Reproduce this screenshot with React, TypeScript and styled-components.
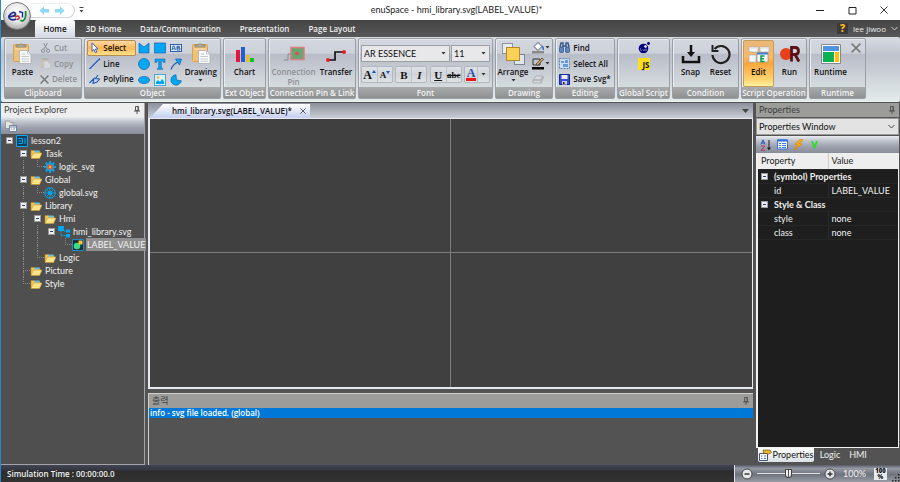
import React from "react";
import styled, { createGlobalStyle, css } from "styled-components";

const Global = createGlobalStyle`
  *, *::before, *::after { box-sizing: border-box; }
  html, body { margin: 0; }
  body { background: #535353; }
  button, select, input { font: inherit; color: inherit; margin: 0; padding: 0; }
  button { border: 0; background: none; cursor: default; }
  svg { display: block; flex: none; }
`;

const textStack = `Lato, "Noto Sans", "Noto Sans CJK KR", sans-serif`;
const labelStack = `"Open Sans", "Noto Sans", sans-serif`;
const barGradient = "linear-gradient(#e9edf1 0, #c3c7cf 25%, #9da2ae 60%, #888d99 100%)";

const labelText = css`
  font-family: ${labelStack};
  font-size: 8px;
  font-weight: 600;
`;

const Window = styled.div`
  display: flex;
  flex-direction: column;
  min-height: 100vh;
  border-left: 1px solid #2b86d0;
  background: #535353;
  color: #111;
  font: 9px/12px ${textStack};
`;

/* ---------- title bar and tabs ---------- */
const Header = styled.header`
  position: relative;
`;
const TitleBar = styled.div`
  display: grid;
  grid-template-columns: 1fr auto 1fr;
  align-items: center;
  height: 20px;
  background: #fff;
  padding-left: 12px;
`;
const QuickBar = styled.div`
  display: flex;
  align-items: center;
  gap: 4px;
  padding-left: 18px;
`;
const QuickPill = styled.div`
  display: flex;
  align-items: center;
  gap: 4px;
  width: 44px;
  height: 15px;
  padding-left: 8px;
  border: 1px solid #cdd3da;
  border-left: 0;
  border-top-color: #eceff2;
  border-radius: 0 8px 8px 0;
`;
const Title = styled.h1`
  margin: 0;
  font-size: 9px;
  font-weight: 400;
  color: #222;
`;
const WindowButtons = styled.div`
  display: flex;
  justify-content: flex-end;
  gap: 23px;
  padding-right: 12px;
`;
const AppButton = styled.button`
  position: absolute;
  left: 2px;
  top: 2px;
  width: 28px;
  height: 28px;
  border-radius: 50%;
  border: 1px solid #777;
  background: radial-gradient(circle at 50% 35%, #fff 0, #e8e8e8 45%, #b5b5b5 75%, #8c8c8c 100%);
  display: grid;
  place-items: center;
`;
const TabRow = styled.nav`
  display: flex;
  align-items: stretch;
  height: 17px;
  padding: 0 2px 0 34px;
  background: linear-gradient(#454545, #575757);
  color: #eee;
  ${labelText}
`;
const Tab = styled.button<{ $w: number; $on?: boolean }>`
  width: ${(p) => p.$w}px;
  border-radius: 2px 2px 0 0;
  padding-top: 1px;
  ${(p) =>
    p.$on &&
    css`
      background: linear-gradient(#fff, #d5dae3);
      color: #111;
    `}
`;
const User = styled.div`
  display: flex;
  align-items: center;
  gap: 5px;
  margin-left: auto;
  font-weight: 400;
`;
const Help = styled.button`
  width: 11px;
  height: 11px;
  background: #3a3a3a;
  color: #fdb813;
  font-size: 10px;
  line-height: 11px;
  font-weight: 800;
`;

/* ---------- ribbon ---------- */
const Ribbon = styled.div`
  display: flex;
  gap: 2px;
  padding: 1px 2px 2px 3px;
  background: linear-gradient(#d8dce2 0, #bfc3cd 28%, #c8ccd3 50%, #e2ebea 100%);
  border-radius: 2px;
  border-bottom: 1px solid #eef4f3;
  overflow: hidden;
  line-height: 10px;
  ${labelText}
`;
const GroupBox = styled.section<{ $w: number }>`
  display: flex;
  flex-direction: column;
  flex: 0 0 ${(p) => p.$w}px;
  min-width: 0;
  height: 61px;
  border: 1px solid #9b9fa5;
  border-radius: 2px;
  box-shadow: inset 1px 1px 0 #e8ebef;
  background: linear-gradient(#d3d7de 0, #cdd1d9 24%, #b9bdc8 26%, #c6cad2 50%, #dde7e6 100%);
`;
const GroupBody = styled.div<{ $pad?: number }>`
  display: flex;
  flex: 1;
  min-height: 0;
  padding: 1px ${(p) => p.$pad ?? 2}px 0;
  justify-content: center;
`;
const Caption = styled.h2`
  display: flex;
  justify-content: center;
  flex: none;
  margin: 0;
  height: 11px;
  line-height: 11px;
  white-space: nowrap;
  color: #f4f4f4;
  background: linear-gradient(#a9abad, #8e9092);
  ${labelText}
`;
const Big = styled.button<{ $w: number; $hot?: boolean }>`
  display: flex;
  flex: none;
  flex-direction: column;
  align-items: center;
  width: ${(p) => p.$w}px;
  height: 47px;
  padding-top: 2px;
  gap: 2px;
  white-space: nowrap;
  border-radius: 2px;
  border: 1px solid transparent;
  &:disabled { color: #8c8f94; }
  ${(p) =>
    p.$hot &&
    css`
      border-color: #c59b5b;
      background: linear-gradient(#e8b878 0, #fbb765 35%, #fba540 50%, #fdd26e 85%, #fff0a0 100%);
    `}
`;
const Stack = styled.div`
  display: flex;
  flex-direction: column;
  flex: none;
`;
const Small = styled.button<{ $hot?: boolean; $gap?: number }>`
  display: flex;
  align-items: center;
  gap: ${(p) => p.$gap ?? 3}px;
  height: 16px;
  padding: 0 1px;
  white-space: nowrap;
  border: 1px solid transparent;
  border-radius: 2px;
  &:disabled { color: #8c8f94; }
  ${(p) =>
    p.$hot &&
    css`
      border-color: #b98b4a;
      background: linear-gradient(#fcd9a6, #fdb85b 50%, #fee08a);
    `}
`;
const Faded = styled.span`
  opacity: 0.55;
  filter: grayscale(0.5);
`;
const ShapeGrid = styled.div`
  display: grid;
  flex: none;
  grid-template-columns: repeat(3, 16px);
  grid-auto-rows: 16px;
`;
const IconButton = styled.button`
  display: flex;
  align-items: center;
  justify-content: center;
  gap: 2px;
`;
const FontPanel = styled.div`
  display: flex;
  flex-direction: column;
  flex: 1;
  gap: 4px;
  padding-top: 5px;
`;
const FontRow = styled.div`
  display: flex;
  justify-content: space-between;
`;
const Combo = styled.div<{ $w: number }>`
  display: grid;
  align-items: center;
  width: ${(p) => p.$w}px;
  height: 17px;
  border: 1px solid #9b9fa6;
  background: #e8e8ea;
  font-family: ${textStack};
  font-size: 9px;
  font-weight: 400;
  > * { grid-area: 1 / 1; }
  > svg { justify-self: end; margin-right: 3px; pointer-events: none; }
`;
const PlainSelect = styled.select`
  appearance: none;
  width: 100%;
  height: 100%;
  border: 0;
  padding-left: 2px;
  background: transparent;
`;
const ToolPair = styled.div<{ $w: number }>`
  display: grid;
  grid-template-columns: 1fr 1fr;
  width: ${(p) => p.$w}px;
  height: 17px;
  border: 1px solid #b4b8be;
  border-radius: 2px;
  background: linear-gradient(#dfe3e8, #cfd4da 50%, #dde4e5);
`;
const Letter = styled.button<{ $size?: number; $italic?: boolean; $line?: string }>`
  display: flex;
  align-items: center;
  justify-content: center;
  min-width: 0;
  font-family: "Liberation Serif", serif;
  font-weight: 700;
  font-size: ${(p) => p.$size ?? 11}px;
  font-style: ${(p) => (p.$italic ? "italic" : "normal")};
  text-decoration: ${(p) => p.$line ?? "none"};
  & + & { border-left: 1px solid #bfc3c8; }
`;
const ColorLetter = styled.span`
  font-family: "Liberation Serif", serif;
  font-size: 12px;
  line-height: 10px;
  color: #2a4fa0;
  border-bottom: 3px solid #f01414;
  padding: 0 1px;
`;
const JsBadge = styled.span`
  display: block;
  width: 12px;
  height: 12px;
  background: #ffe01b;
  color: #111;
  font-size: 8px;
  line-height: 14px;
  font-weight: 700;
  text-align: right;
`;

/* ---------- workspace ---------- */
const Workspace = styled.main`
  display: grid;
  grid-template-columns: 144px minmax(0, 1fr) 143px;
  gap: 3px;
  flex: 1;
  margin-top: 1px;
  padding-right: 1px;
  background: #535353;
`;
const Panel = styled.section`
  display: flex;
  flex-direction: column;
  min-width: 0;
`;
const PanelBordered = styled(Panel)`
  border-right: 1px solid #a5a5a5;
  border-bottom: 1px solid #a5a5a5;
  background: #4f4f4f;
`;
const PanelHead = styled.div<{ $dim?: boolean }>`
  display: flex;
  align-items: center;
  justify-content: space-between;
  height: 14px;
  padding: 0 4px 0 3px;
  background: ${(p) => (p.$dim ? "#9c9d9b" : "#eeeeee")};
  color: ${(p) => (p.$dim ? "#3f3f3f" : "#444")};
`;
const Toolbar = styled.div`
  display: flex;
  align-items: center;
  gap: 5px;
  height: 17px;
  padding: 0 5px 0 4px;
  background: ${barGradient};
`;
const Tree = styled.ul`
  margin: 0;
  padding: 0 0 0 1px;
  list-style: none;
  color: #f0f0f0;
`;
const TreeRow = styled.li`
  display: flex;
  align-items: center;
  height: 13px;
`;
const Rail = styled.span<{ $kind: string }>`
  width: 14px;
  height: 13px;
  flex: none;
  display: grid;
  grid-template: 1fr 1fr / 1fr 1fr;
  &::before {
    content: "";
    grid-area: 1 / 2;
    border-left: ${(p) => (p.$kind === " " ? "0" : "1px dotted #8a8a8a")};
    border-bottom: ${(p) => (p.$kind === "L" || p.$kind === "T" ? "1px dotted #8a8a8a" : "0")};
  }
  &::after {
    content: "";
    grid-area: 2 / 2;
    border-left: ${(p) => (p.$kind === "|" || p.$kind === "T" ? "1px dotted #8a8a8a" : "0")};
  }
`;
const ExpandCell = styled.span`
  width: 14px;
  flex: none;
  display: grid;
  place-items: center;
`;
const Expander = styled.button`
  width: 7px;
  height: 7px;
  background: #eef0f4;
  border: 1px solid #9a9a9a;
  display: grid;
  place-items: center;
  &::before { content: ""; width: 3px; height: 1px; background: #2b3d77; }
`;
const TreeLabel = styled.span<{ $on?: boolean }>`
  margin-left: 2px;
  padding: 0 1px;
  line-height: 13px;
  white-space: nowrap;
  background: ${(p) => (p.$on ? "#8f8f8f" : "transparent")};
`;
const DocTabs = styled.div`
  display: flex;
  align-items: flex-end;
  justify-content: space-between;
  height: 15px;
  padding: 0 4px 0 2px;
  background: linear-gradient(#8b909b, #c9cdd4);
`;
const DocTab = styled.div`
  display: flex;
  align-items: center;
  gap: 8px;
  width: 160px;
  height: 14px;
  padding: 0 4px 0 20px;
  justify-content: flex-end;
  white-space: nowrap;
  background: linear-gradient(#fff, #c5d0f0);
  clip-path: polygon(13px 0, 100% 0, 100% 100%, 0 100%);
  ${labelText}
`;
const MenuCell = styled.button`
  display: grid;
  place-items: center;
  height: 14px;
`;
const Canvas = styled.div`
  flex: 1;
  display: grid;
  grid-template: 1fr 1fr / 1fr 1fr;
  border: 1px solid #e6e9ef;
  border-width: 1px 1px 2px 2px;
  background: #404040;
`;
const Quadrant = styled.div<{ $right?: boolean; $bottom?: boolean }>`
  border: 0 solid #7c7c7c;
  border-right-width: ${(p) => (p.$right ? 1 : 0)}px;
  border-bottom-width: ${(p) => (p.$bottom ? 1 : 0)}px;
`;
const Output = styled(Panel)`
  height: 72px;
  margin-top: 4px;
  border-top: 1px solid #d0d0d0;
  border-left: 1px solid #d0d0d0;
  background: #535353;
`;
const OutputLine = styled.div`
  height: 10px;
  padding-left: 1px;
  background: #0078d7;
  color: #fff;
  line-height: 10px;
  ${labelText}
`;
const PropSelect = styled.div`
  display: grid;
  align-items: center;
  height: 17px;
  margin: 1px 0;
  border: 1px solid #9a9a9a;
  background: #e3e3e3;
  > * { grid-area: 1 / 1; }
  > svg { justify-self: end; margin-right: 3px; pointer-events: none; }
`;
const PropFrame = styled.div`
  flex: 1;
  border: 1px solid #f2f2f2;
  border-width: 0 1px 1px 2px;
  background: #1e1e1e;
  display: flex;
`;
const PropTable = styled.table`
  width: 100%;
  height: max-content;
  border-collapse: collapse;
  table-layout: fixed;
  color: #f0f0f0;
  th, td {
    height: 14px;
    padding: 0 3px;
    text-align: left;
    font-weight: 400;
    border-bottom: 1px solid #262626;
    line-height: 13px;
  }
  thead th { height: 16px; background: #eeeeee; color: #222; }
  thead th + th { border-left: 1px solid #ccc; }
  tbody td { border-left: 1px solid #2a2a2a; }
  tbody th { padding-left: 16px; }
`;
const PropGroup = styled.div`
  display: flex;
  align-items: center;
  gap: 6px;
  margin-left: -13px;
  font-weight: 700;
`;
const DockTabs = styled.div`
  display: flex;
  align-items: center;
  height: 17px;
  padding: 0 0 3px 2px;
  color: #f0f0f0;
`;
const DockTab = styled.button<{ $w: number; $on?: boolean }>`
  display: flex;
  align-items: center;
  justify-content: center;
  gap: 1px;
  width: ${(p) => p.$w}px;
  height: 14px;
  ${(p) =>
    p.$on &&
    css`
      background: linear-gradient(#fff, #dbe1e6);
      color: #111;
      border-radius: 0 0 2px 2px;
    `}
`;

/* ---------- status bar ---------- */
const StatusBar = styled.footer`
  display: flex;
  justify-content: space-between;
  align-items: stretch;
  height: 17px;
  background: linear-gradient(#414554 0, #353740 30%, #2c2c2c 35%, #333 100%);
  color: #f2f2f2;
`;
const Simulation = styled.span`
  padding-left: 6px;
  line-height: 17px;
  ${labelText}
`;
const ZoomBar = styled.div`
  display: flex;
  align-items: center;
  width: 166px;
  padding-left: 6px;
  gap: 4px;
  background: linear-gradient(#555a66 0, #9599a2 20%, #6e737d 55%, #999da4 100%);
  border-left: 1px solid #ddd;
`;
const RoundButton = styled.button`
  width: 12px;
  height: 12px;
`;
const Percent = styled.span`
  padding-left: 3px;
`;
const Slider = styled.input`
  appearance: none;
  width: 63px;
  height: 12px;
  background: linear-gradient(#e0e0e0, #e0e0e0) center / 100% 1px no-repeat;
  &::-webkit-slider-thumb {
    appearance: none;
    width: 7px;
    height: 9px;
    border: 1px solid #444;
    border-radius: 1px 1px 4px 4px;
    background: linear-gradient(90deg, #eee 40%, #555 40%, #555 60%, #eee 60%);
  }
`;
const FitButton = styled.button`
  width: 15px;
  height: 12px;
  margin-left: 4px;
  background: #e8ecef;
  color: #111;
  font-family: ${labelStack};
  font-size: 6px;
  line-height: 6px;
  font-weight: 800;
`;
const Grip = styled.span`
  align-self: flex-end;
  margin-left: auto;
`;

/* ---------- icons ---------- */
type SvgProps = { w?: number; h?: number; vb?: string; children: React.ReactNode };
const Svg = ({ w = 12, h = w, vb, children }: SvgProps) => (
  <svg width={w} height={h} viewBox={vb ?? `0 0 ${w} ${h}`} fill="none" aria-hidden="true">{children}</svg>
);
const Caret = ({ c = "#333" }: { c?: string }) => <Svg w={5} h={3}><path d="M0.5 0h4L2.5 2.5z" fill={c} /></Svg>;
const Pin = () => (
  <Svg w={6} h={8}><path d="M1.500 .5h3v4h-3zM0 5h6M3 5v3" stroke="#555" /><path d="M4 1v3.500" stroke="#555" /></Svg>
);
const Chevron = ({ c = "#444" }: { c?: string }) => <Svg w={7} h={5}><path d="M.5 1l3 3 3-3" stroke={c} /></Svg>;
const Cross = ({ s = 8, c = "#333", t = 1 }: { s?: number; c?: string; t?: number }) => (
  <Svg w={s} vb="0 0 8 8"><path d="M.5.5l7 7M7.500.5l-7 7" stroke={c} strokeWidth={t} /></Svg>
);
const PasteIcon = ({ s = 22 }: { s?: number }) => (
  <Svg w={s} vb="0 0 22 22">
    <rect x="2.500" y="1.500" width="15" height="17" rx="1" fill="#efc27c" stroke="#dba24a" />
    <path d="M5 4V2h3q2-2.500 4 0h3v2z" fill="#b9b4a8" stroke="#77736a" strokeWidth=".7" />
    <path d="M4 6h12" stroke="#fbe3b4" />
    <path d="M8.500 7.500h8l3.500 3.500v9.500H8.500z" fill="#f9fafb" stroke="#a9adb3" strokeWidth=".8" />
    <path d="M16.500 7.500V11H20M10.500 11h4M10.500 13.500h7.500M10.500 16h7.500M10.500 18.300h7.500" stroke="#b7bcc4" strokeWidth=".8" />
  </Svg>
);
const Arrow = ({ flip }: { flip?: boolean }) => (
  <Svg w={11} h={9}><path d={flip ? "M10.500 4.500L6 .5V3H1v3.500h5v2.500z" : "M.5 4.500L5 .5V3h5v3.500H5v2.500z"} fill="#8ed8f8" /></Svg>
);
const blue = "#00a8f3";
const edge = "#1c62b5";
const shapes: [string, React.ReactNode][] = [
  ["Path", <Svg><path d="M1 1l5 4 5-4v10H1z" fill={blue} stroke={edge} strokeWidth=".7" /></Svg>],
  ["Rectangle", <Svg><rect x=".5" y="1" width="11" height="10" fill={blue} stroke={edge} strokeWidth=".7" /></Svg>],
  ["Text box", <Svg><rect x=".5" y="2.500" width="11" height="7" fill="#d9e8f7" stroke="#2b5fa8" /><path d="M2 8l1.200-4h1L5.500 8M2.500 6.800h2.500M7 4v4M7 4.300h2.300v1.500H7M7 6h2.800v2H7" stroke="#1d4f9c" strokeWidth=".8" /></Svg>],
  ["Circle", <Svg><circle cx="6" cy="6" r="5.500" fill={blue} stroke={edge} strokeWidth=".7" /></Svg>],
  ["Text", <Svg><path d="M1 1h10v3.500H9.500L9 3H7.300v7l1.500.5v.8H3.200v-.8l1.500-.5V3H3L2.500 4.500H1z" fill={blue} stroke={edge} strokeWidth=".6" /></Svg>],
  ["Arrow", <Svg><path d="M1 11.500Q3 6 8 4" stroke={edge} strokeWidth="1.300" /><path d="M5.500 1L11.500 1 9.500 7z" fill={blue} stroke={edge} strokeWidth=".8" /></Svg>],
  ["Ellipse", <Svg><ellipse cx="6" cy="6" rx="5.600" ry="3.600" fill={blue} stroke={edge} strokeWidth=".7" /></Svg>],
  ["Image", <Svg><rect x=".5" y=".5" width="11" height="11" fill="#dff2fc" stroke="#4aa4d8" /><path d="M2 10V8l2-2 2 2 2-3 2 2.500V10z" fill={blue} /><circle cx="4" cy="3.500" r="1.300" fill="#ffb52e" /></Svg>],
  ["Pie", <Svg><path d="M6 .8A5.200 5.200 0 1 0 11.300 6.800L6.500 6z" fill={blue} stroke={edge} strokeWidth=".7" /></Svg>],
];
const Folder = () => (
  <Svg w={12}>
    <path d="M1 10V2.500h3.500l1 1H10V5" fill="#f6c64f" stroke="#b98a2a" strokeWidth=".6" />
    <path d="M5 2.500h4.500v2H4z" fill="#5fc3ee" />
    <path d="M1 10.500L3.500 5H12l-2.500 5.500z" fill="#ffe48a" stroke="#d29a2b" strokeWidth=".6" />
  </Svg>
);
const treeIcons: Record<string, React.ReactNode> = {
  folder: <Folder />,
  root: <Svg><path d="M.5.5h11v11H.5z" fill="#153f5c" stroke={blue} /><path d="M2.500 3.500h4v5h-4M2.500 6h3M9 3v6" stroke={blue} /></Svg>,
  gear: <Svg><path d="M6 0v12M0 6h12M1.800 1.800l8.400 8.400M10.200 1.800l-8.400 8.400" stroke={blue} strokeWidth="2" /><circle cx="6" cy="6" r="4" fill={blue} /><path d="M6 2.500l3.500 3.500L6 9.500 2.500 6z" fill="#ef5a24" /><circle cx="6" cy="6" r="1" fill="#ffd23c" /></Svg>,
  globe: <Svg><circle cx="6" cy="6" r="5.200" stroke={blue} /><path d="M6 1v10M1 6h10M2.500 2.500l7 7M9.500 2.500l-7 7" stroke={blue} strokeWidth=".9" /><circle cx="6" cy="6" r="2" fill={blue} /></Svg>,
  lib: <Svg><path d="M0 0h6v5H0zM8 3.500h4v3H8zM8 8h4v3.500H8z" fill={blue} /><path d="M3 5v4.500h5M6 5h2" stroke={blue} strokeDasharray="1 .5" /></Svg>,
  symbol: <Svg><path d="M.5.5h11v11H.5z" fill="#1b3038" stroke="#1b8cc4" /><circle cx="5" cy="7" r="3.300" fill="#3ddc84" /><path d="M6.500 1.500h4v4h-4z" fill="#ffc02e" /></Svg>,
};

/* One rail character per indent level: blank, through line, tee or elbow. */
type Node = { rails: string; icon: string; label: string; open?: boolean; on?: boolean };
const nodes: Node[] = [
  { rails: "", icon: "root", label: "lesson2", open: true },
  { rails: " ", icon: "folder", label: "Task", open: true },
  { rails: " |L", icon: "gear", label: "logic_svg" },
  { rails: " ", icon: "folder", label: "Global", open: true },
  { rails: " |L", icon: "globe", label: "global.svg" },
  { rails: " ", icon: "folder", label: "Library", open: true },
  { rails: " |", icon: "folder", label: "Hmi", open: true },
  { rails: " ||", icon: "lib", label: "hmi_library.svg", open: true },
  { rails: " || L", icon: "symbol", label: "LABEL_VALUE", on: true },
  { rails: " |L", icon: "folder", label: "Logic" },
  { rails: " T", icon: "folder", label: "Picture" },
  { rails: " L", icon: "folder", label: "Style" },
];

type GroupProps = { title: string; w: number; pad?: number; children: React.ReactNode };
const Group = ({ title, w, pad, children }: GroupProps) => (
  <GroupBox $w={w} aria-label={title}>
    <GroupBody $pad={pad}>{children}</GroupBody>
    <Caption>{title}</Caption>
  </GroupBox>
);

const tabs: [string, number][] = [["Home", 40], ["3D Home", 57], ["Data/Communcation", 97], ["Presentation", 71], ["Page Layout", 64]];

const RibbonBar = () => (
  <Ribbon>
    <Group title="Clipboard" w={78} pad={1}>
      <Big $w={31}><PasteIcon />Paste</Big>
      <Stack>
        <Small disabled><Svg w={11}><path d="M3.500 1l3.500 6M7.500 1l-3.500 6" stroke="#868b94" /><circle cx="3" cy="8.800" r="1.600" stroke="#868b94" /><circle cx="8" cy="8.800" r="1.600" stroke="#868b94" /></Svg>Cut</Small>
        <Small disabled><Faded><PasteIcon s={11} /></Faded>Copy</Small>
        <Small disabled><Cross s={9} c="#777" t={1.3} />Delete</Small>
      </Stack>
    </Group>
    <Group title="Object" w={137}>
      <Stack>
        <Small $hot><Svg w={11}><path d="M3 .8v8.500l2-1.800 1.300 3.200 1.500-.7-1.400-3H9z" fill="#fff" stroke="#2b57b5" strokeWidth=".9" /></Svg>Select</Small>
        <Small><Svg w={11}><path d="M.5 11L11 .5" stroke="#1b56c0" strokeWidth="1.200" /></Svg>Line</Small>
        <Small><Svg w={11}><path d="M.5 9L5 4.500 4 9.500 8 8 10.500 5 6.500 4.500 9 1" stroke="#1b56c0" strokeWidth="1.100" /></Svg>Polyline</Small>
      </Stack>
      <ShapeGrid>
        {shapes.map(([name, icon]) => <IconButton key={name} aria-label={name}>{icon}</IconButton>)}
      </ShapeGrid>
      <Big $w={34}><PasteIcon />Drawing<Caret /></Big>
    </Group>
    <Group title="Ext Object" w={43}>
      <Big $w={38}>
        <Svg w={22}><path d="M2 7h4v12H2z" fill="#e8143c" /><path d="M7 4h4v15H7z" fill="#1b62d8" /><path d="M12 12h3v7h-3z" fill="#f4b71e" /><path d="M16 15h4v4h-4z" fill="#11c411" /></Svg>
        Chart
      </Big>
    </Group>
    <Group title="Connection Pin & Link" w={88} pad={0}>
      <Big $w={48} disabled>
        <Svg w={22}><path d="M1 17h4V11h8" stroke="#888" /><rect x="8" y="4.500" width="13" height="12" fill="#6aa56f" stroke="#df7b84" strokeWidth="1.500" /><circle cx="14" cy="10.500" r="1.800" fill="#dd4b55" /></Svg>
        <span>Connection<br />Pin</span>
      </Big>
      <Big $w={37}>
        <Svg w={22}><path d="M2 17h8V9h9" stroke="#111" strokeWidth="1.700" /><circle cx="3" cy="17" r="2" fill="#ed1c24" /><circle cx="19" cy="9" r="2" fill="#ed1c24" /></Svg>
        Transfer
      </Big>
    </Group>
    <Group title="Font" w={135}>
      <FontPanel>
        <FontRow>
          <Combo $w={89}><PlainSelect aria-label="Font family"><option>AR ESSENCE</option></PlainSelect><Caret /></Combo>
          <Combo $w={39}><PlainSelect aria-label="Font size"><option>11</option></PlainSelect><Caret /></Combo>
        </FontRow>
        <FontRow>
          <ToolPair $w={32}>
            <Letter $size={12}>A<Svg w={4} h={9}><path d="M0 3h4L2 0z" fill="#1b56c0" /></Svg></Letter>
            <Letter $size={9}>A<Svg w={4} h={9}><path d="M0 1h4L2 4z" fill="#1b56c0" /></Svg></Letter>
          </ToolPair>
          <ToolPair $w={32}><Letter>B</Letter><Letter $italic>I</Letter></ToolPair>
          <ToolPair $w={32}><Letter $line="underline">U</Letter><Letter $size={9} $line="line-through">abc</Letter></ToolPair>
          <ToolPair $w={26}><Letter aria-label="Font colour"><ColorLetter>A</ColorLetter></Letter><Letter aria-label="More colours"><Caret /></Letter></ToolPair>
        </FontRow>
      </FontPanel>
    </Group>
    <Group title="Drawing" w={58} pad={0}>
      <Big $w={34}>
        <Svg w={24} h={22}><rect x="1.500" y=".5" width="10" height="10" fill="#e9edf2" stroke="#8d949e" /><rect x="13.500" y="11.500" width="10" height="10" fill="#dfe5ee" stroke="#7d8794" /><rect x="5.500" y="4.500" width="13" height="13" fill="#fbd158" stroke="#b88a25" /></Svg>
        Arrange<Caret />
      </Big>
      <Stack>
        <Small $gap={1} aria-label="Fill"><Svg w={12} h={13}><path d="M2 5.500L6 1.500l4 4-4 4z" fill="#fff" stroke="#46556e" /><path d="M10 5q2 2 1 4" stroke="#2a71c9" strokeWidth="1.500" /><path d="M0 10h12v2.500H0z" fill="#8a8a8a" /></Svg><Caret /></Small>
        <Small $gap={1} aria-label="Outline"><Svg w={12} h={13}><path d="M1 2h7v6H1z" stroke="#333" /><path d="M4 7l6-6 1.500 1.500-6 6z" fill="#d8a45a" stroke="#333" strokeWidth=".7" /><path d="M0 10h12v2.500H0z" fill="#000" /></Svg><Caret /></Small>
        <Small aria-label="Shadow"><Svg w={12}><path d="M1 7l3-4h7l-2 4zM1 7h8v3H1zM9 7l2-4v3L9 10" fill="#d7dadd" stroke="#a3a7ab" strokeWidth=".8" /></Svg></Small>
      </Stack>
    </Group>
    <Group title="Editing" w={60}>
      <Stack>
        <Small><Svg w={11}><path d="M1 5l1-4h2v4M10 5L9 1H7v4M4.500 4h2" stroke="#36598f" strokeWidth="1.500" /><rect x=".5" y="5" width="4" height="5.500" rx="1" fill="#5e86c2" stroke="#2d4d80" strokeWidth=".7" /><rect x="6.500" y="5" width="4" height="5.500" rx="1" fill="#5e86c2" stroke="#2d4d80" strokeWidth=".7" /></Svg>Find</Small>
        <Small><Svg w={11}><path d="M.5.5h10v10H.5z" fill="#c9dcf4" stroke="#5f83b5" strokeDasharray="2 1" /><path d="M2 3h3v2H2zM6 2h3v3H6zM4 6h5v3H4z" fill="#6e9ad4" /></Svg>Select All</Small>
        <Small><Svg w={11}><path d="M.5.5h10v10H.5z" fill="#3a50d4" stroke="#1a2a8c" /><path d="M2.500 1h6v4h-6z" fill="#e9edfb" /><path d="M3 7h5v3.500H3z" fill="#cfd3e0" /><path d="M4 8h1.500v2H4z" fill="#223" /></Svg>Save Svg*</Small>
      </Stack>
    </Group>
    <Group title="Global Script" w={53} pad={0}>
      <Stack>
        <Small aria-label="Lua"><Svg><circle cx="5.500" cy="6.500" r="4.800" fill="#000080" /><circle cx="7.500" cy="4.500" r="1.300" fill="#fff" /><circle cx="10.500" cy="1.500" r="1.400" fill="#000080" /><path d="M2.500 6v2.500h1.500M5 7v1.500h1.500V7M7.500 7h1v1.500h-1z" stroke="#aab" strokeWidth=".5" /></Svg></Small>
        <Small><JsBadge>JS</JsBadge></Small>
      </Stack>
    </Group>
    <Group title="Condition" w={67}>
      <Big $w={30}><Svg w={22}><path d="M3 13v6h16v-6" stroke="#111" strokeWidth="2.500" /><path d="M11 2v9" stroke="#111" strokeWidth="2.500" /><path d="M7 9h8l-4 5z" fill="#111" /></Svg>Snap</Big>
      <Big $w={30}><Svg w={22}><path d="M4.500 6A8.500 8.500 0 1 1 2.500 12" stroke="#222" strokeWidth="2.200" /><path d="M2.500 2v6h6" stroke="#222" strokeWidth="2" /></Svg>Reset</Big>
    </Group>
    <Group title="Script Operation" w={66} pad={1}>
      <Big $w={31} $hot>
        <Svg w={22}><path d="M1 4h9v5H1zM12 4h9v5h-9zM1 12h7v7H1z" fill="#f6f7fa" stroke="#9ab" strokeWidth=".6" /><path d="M1 4h9v1.500H1zM12 4h9v1.500h-9z" fill="#d9dde8" /><path d="M9 10h11v9H9z" fill="#f0f8f4" stroke="#888" strokeWidth=".6" /><path d="M9 9.500h11v2H9z" fill="#3d7dd8" /><path d="M16.500 13h-3.500v5.500h3.500M13 15.700h3" stroke="#0a9a4c" strokeWidth="1.500" /></Svg>
        Edit
      </Big>
      <Big $w={31}>
        <Svg w={22}><circle cx="7" cy="11" r="6" fill="#e8401c" /><path d="M12.500 18.500V4.500h3.500q3.500 0 3.500 3.500t-3.500 3.500h-3M16 11.500l4 7" stroke="#5a1216" strokeWidth="2.800" /></Svg>
        Run
      </Big>
    </Group>
    <Group title="Runtime" w={57} pad={1}>
      <Big $w={37}><Svg w={20} h={22}><path d="M.5 1.500h19v19H.5z" fill="#fff" stroke="#888" /><path d="M2 3h16v5H2z" fill="#4f94e0" /><path d="M2 9h11v10H2z" fill="#0bb050" /><path d="M14 9h4v10h-4z" fill="#ffc000" /></Svg>Runtime</Big>
      <Stack><Small disabled aria-label="Stop"><Cross s={10} c="#777" t={1.2} /></Small></Stack>
    </Group>
  </Ribbon>
);

export default function App() {
  return (
    <Window>
      <Global />
      <Header>
        <TitleBar>
          <QuickBar>
            <QuickPill><Arrow /><Arrow flip /></QuickPill>
            <IconButton aria-label="Customize"><Svg w={5} h={6}><path d="M.5.5h4" stroke="#444" /><path d="M.5 3h4l-2 2.500z" fill="#444" /></Svg></IconButton>
          </QuickBar>
          <Title>enuSpace - hmi_library.svg(LABEL_VALUE)*</Title>
          <WindowButtons>
            <IconButton aria-label="Minimize"><Svg w={9}><path d="M0 4.500h8" stroke="#222" /></Svg></IconButton>
            <IconButton aria-label="Maximize"><Svg w={9}><path d="M1 1.500h7v6.500H1z" stroke="#222" /></Svg></IconButton>
            <IconButton aria-label="Close"><Cross s={8} /></IconButton>
          </WindowButtons>
        </TitleBar>
        <TabRow>
          {tabs.map(([t, w], i) => <Tab key={t} $w={w} $on={i === 0}>{t}</Tab>)}
          <User><Help>?</Help>lee jiwoo<Chevron c="#ccc" /></User>
        </TabRow>
        <AppButton aria-label="Application menu">
          <Svg w={22} h={14}>
            <path d="M2 7.500q7 .5 7.500-2.500Q9 2.500 6 4 2 6.500 3.500 9.500q2 2.500 7 .5" stroke="#1d2f8f" strokeWidth="1.800" />
            <path d="M9 8q3-2 4 0t-2 2.500" stroke="#d8232a" strokeWidth="1.600" />
            <path d="M13 2.500l3.500 1v5" stroke="#1d2f8f" strokeWidth="1.400" />
            <path d="M19.500 2q1 7-2 9.500-2 1-3-.5" stroke="#128a3e" strokeWidth="1.800" />
          </Svg>
        </AppButton>
      </Header>
      <RibbonBar />
      <Workspace>
        <PanelBordered>
          <PanelHead>Project Explorer<Pin /></PanelHead>
          <Toolbar><IconButton aria-label="View">
            <Svg w={12}><path d="M.5 2.500V1h4l1 1.500H8v6H.5z" fill="#e8e6da" stroke="#8b8f90" strokeWidth=".8" /><path d="M4.500 5.500h7v6h-7z" fill="#f7f8fa" stroke="#5c6f98" strokeWidth=".8" /><path d="M4.500 7h7M6 9h1M8 9h2" stroke="#5c6f98" strokeWidth=".8" /></Svg>
          </IconButton></Toolbar>
          <Tree>
            {nodes.map((n) => (
              <TreeRow key={n.label}>
                {[...n.rails].map((k, i) => <Rail key={i} $kind={k} />)}
                {n.open && <ExpandCell><Expander aria-label={`Collapse ${n.label}`} /></ExpandCell>}
                {treeIcons[n.icon]}
                <TreeLabel $on={n.on}>{n.label}</TreeLabel>
              </TreeRow>
            ))}
          </Tree>
        </PanelBordered>

        <Panel>
          <DocTabs>
            <DocTab>hmi_library.svg(LABEL_VALUE)*<IconButton aria-label="Close document"><Cross s={6} /></IconButton></DocTab>
            <MenuCell aria-label="Documents"><Svg w={7} h={4}><path d="M0 0h7L3.500 4z" fill="#444" /></Svg></MenuCell>
          </DocTabs>
          <Canvas>
            <Quadrant $right $bottom /><Quadrant $bottom /><Quadrant $right /><Quadrant />
          </Canvas>
          <Output>
            <PanelHead $dim>출력<Pin /></PanelHead>
            <OutputLine>info - svg file loaded. (global)</OutputLine>
          </Output>
        </Panel>

        <Panel>
          <PanelHead $dim>Properties<Pin /></PanelHead>
          <PropSelect><PlainSelect aria-label="Property source"><option>Properties Window</option></PlainSelect><Chevron /></PropSelect>
          <Toolbar>
            <IconButton aria-label="Sort"><Svg w={12}><path d="M1 5.500L3 .8l2 4.700M1.500 4h3" stroke="#2a55c0" /><path d="M1 7h4L1 11.300h4" stroke="#b03a6a" /><path d="M9 1v9" stroke="#222" /><path d="M7 8.500h4L9 11.500z" fill="#222" /></Svg></IconButton>
            <IconButton aria-label="Categories"><Svg w={11}><path d="M.5 1h10v9H.5z" fill="#f3f7ff" stroke="#2f6fe0" /><path d="M.5 1.500h10" stroke="#2f6fe0" strokeWidth="2" /><path d="M2 4.500h2M5 4.500h4M2 6.500h2M5 6.500h4M2 8.500h2M5 8.500h4" stroke="#2f6fe0" strokeWidth=".9" /></Svg></IconButton>
            <IconButton aria-label="Events"><Svg w={11}><path d="M7.500 0L2 5.500l3 .5-4 5 8-6-3-.5L10 1z" fill="#ffb300" stroke="#e07800" strokeWidth=".6" /></Svg></IconButton>
            <IconButton aria-label="Variables"><Svg w={11}><path d="M3 2l2.500 6.500L8 2" stroke="#28e028" strokeWidth="1.800" /></Svg></IconButton>
          </Toolbar>
          <PropFrame>
            <PropTable>
              <thead><tr><th scope="col">Property</th><th scope="col">Value</th></tr></thead>
              <tbody>
                <tr><th colSpan={2}><PropGroup><Expander aria-label="Collapse Properties" />(symbol) Properties</PropGroup></th></tr>
                <tr><th scope="row">id</th><td>LABEL_VALUE</td></tr>
                <tr><th colSpan={2}><PropGroup><Expander aria-label="Collapse Style" />Style &amp; Class</PropGroup></th></tr>
                <tr><th scope="row">style</th><td>none</td></tr>
                <tr><th scope="row">class</th><td>none</td></tr>
              </tbody>
            </PropTable>
          </PropFrame>
          <DockTabs>
            <DockTab $w={56} $on><Svg w={13}><path d="M.5 4.500h8v7h-8z" fill="#fff" stroke="#44556e" /><path d="M2 7h1.500M5 7h2M2 9.500h1.500M5 9.500h2" stroke="#4a78c0" /><path d="M4 1h7l1.500 2.500-3 1.500-5-1z" fill="#e8b830" stroke="#6a5310" strokeWidth=".7" /></Svg>Properties</DockTab>
            <DockTab $w={32}>Logic</DockTab>
            <DockTab $w={24}>HMI</DockTab>
          </DockTabs>
        </Panel>
      </Workspace>
      <StatusBar>
        <Simulation>Simulation Time : 00:00:00.0</Simulation>
        <ZoomBar>
          <RoundButton aria-label="Zoom out"><Svg><circle cx="6" cy="6" r="5" fill="#e6e9ec" stroke="#444" /><path d="M3.500 6h5" stroke="#333" strokeWidth="1.400" /></Svg></RoundButton>
          <Slider type="range" defaultValue={50} aria-label="Zoom" />
          <RoundButton aria-label="Zoom in"><Svg><circle cx="6" cy="6" r="5" fill="#e6e9ec" stroke="#444" /><path d="M3.500 6h5M6 3.500v5" stroke="#333" strokeWidth="1.400" /></Svg></RoundButton>
          <Percent>100%</Percent>
          <FitButton aria-label="Reset zoom">100 %</FitButton>
          <Grip><Svg w={9}><path d="M7 1h1.500v1.500H7zM4 4h1.500v1.500H4zM7 4h1.500v1.500H7zM1 7h1.500v1.500H1zM4 7h1.500v1.500H4zM7 7h1.500v1.500H7z" fill="#222" /></Svg></Grip>
        </ZoomBar>
      </StatusBar>
    </Window>
  );
}
